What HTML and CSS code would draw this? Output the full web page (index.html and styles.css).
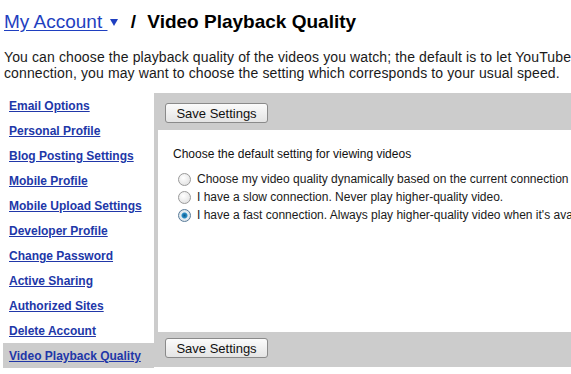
FILE: index.html
```html
<!DOCTYPE html>
<html lang="en">
<head>
    <meta charset="UTF-8">
    <title>Video Playback Quality</title>
    <link rel="stylesheet" href="styles.css">
</head>
<body>
    <div class="page">
        <h1 class="title">
            <a href="#" class="account-link">My Account <span class="caret"></span></a>
            <span class="sep">/</span> Video Playback Quality
        </h1>
        <p class="intro">You can choose the playback quality of the videos you watch; the default is to let YouTube choose the best quality for your<br>connection, you may want to choose the setting which corresponds to your usual speed.</p>

        <div class="settings">
            <ul class="side-nav">
                <li><a href="#">Email Options</a></li>
                <li><a href="#">Personal Profile</a></li>
                <li><a href="#">Blog Posting Settings</a></li>
                <li><a href="#">Mobile Profile</a></li>
                <li><a href="#">Mobile Upload Settings</a></li>
                <li><a href="#">Developer Profile</a></li>
                <li><a href="#">Change Password</a></li>
                <li><a href="#">Active Sharing</a></li>
                <li><a href="#">Authorized Sites</a></li>
                <li><a href="#">Delete Account</a></li>
                <li class="selected"><a href="#">Video Playback Quality</a></li>
            </ul>

            <div class="panel">
                <div class="bar bar-top">
                    <button type="button" class="btn">Save Settings</button>
                </div>
                <div class="content">
                    <p class="question">Choose the default setting for viewing videos</p>
                    <label class="option"><span class="radio"></span>Choose my video quality dynamically based on the current connection speed.</label>
                    <label class="option"><span class="radio"></span>I have a slow connection. Never play higher-quality video.</label>
                    <label class="option"><span class="radio checked"></span>I have a fast connection. Always play higher-quality video when it's available.</label>
                </div>
                <div class="bar bar-bottom">
                    <button type="button" class="btn">Save Settings</button>
                </div>
            </div>
        </div>
    </div>
</body>
</html>
```

FILE: styles.css
```css
html, body {
    margin: 0;
    padding: 0;
    overflow: hidden;
    background: #ffffff;
}
body {
    font-family: 'Liberation Sans', Arial, sans-serif;
    color: #111111;
}
.page {
    width: 800px;
}
.title {
    margin: 0;
    padding: 10px 0 0 4px;
    height: 31px;
    font-size: 19px;
    line-height: 24px;
    font-weight: bold;
    color: #000000;
    white-space: nowrap;
}
.account-link {
    font-weight: normal;
    color: #1f3fc0;
    text-decoration: underline;
    text-underline-offset: 2px;
}
.caret {
    display: inline-block;
    width: 0;
    height: 0;
    border-left: 4px solid transparent;
    border-right: 4px solid transparent;
    border-top: 7px solid #1f3fc0;
    vertical-align: 2px;
    margin-left: 2px;
}
.sep {
    margin: 0 6px 0 8px;
}
.intro {
    margin: 0;
    padding: 8px 0 0 4px;
    height: 44px;
    font-size: 14px;
    line-height: 16px;
    letter-spacing: 0.12px;
    color: #1a1a1a;
    white-space: nowrap;
}
.settings {
    display: flex;
    align-items: flex-start;
}
.side-nav {
    list-style: none;
    margin: 0;
    padding: 0 0 0 3px;
    width: 151px;
    flex-shrink: 0;
}
.side-nav li {
    height: 25px;
    line-height: 27px;
    padding-left: 6px;
    font-size: 12px;
    font-weight: bold;
}
.side-nav a {
    color: #2137a8;
    text-decoration: underline;
}
.side-nav li.selected {
    background: #cccccc;
}
.panel {
    flex: 1;
    background: #cccccc;
    padding-left: 4px;
}
.bar {
    margin-left: -4px;
    padding-left: 11px;
}
.bar-top {
    height: 37px;
    padding-top: 10px;
    box-sizing: border-box;
}
.bar-bottom {
    height: 35px;
    padding-top: 6px;
    box-sizing: border-box;
}
.btn {
    height: 20px;
    width: 103px;
    padding: 0;
    font-family: 'Liberation Sans', Arial, sans-serif;
    font-size: 13px;
    color: #111111;
    background: linear-gradient(#fbfbfb, #e4e4e4);
    border: 1px solid #8a8a8a;
    border-radius: 3px;
}
.content {
    background: #ffffff;
    height: 202px;
    padding: 17px 0 0 15px;
    box-sizing: border-box;
    font-size: 12px;
    white-space: nowrap;
}
.question {
    margin: 0 0 9px;
    line-height: 14px;
}
.option {
    display: flex;
    align-items: center;
    height: 18px;
    padding-left: 5px;
    color: #1a1a1a;
}
.radio {
    width: 11px;
    height: 11px;
    border: 1px solid #9a9a9a;
    border-radius: 50%;
    background: radial-gradient(circle at 40% 35%, #ffffff, #dcdcdc);
    margin-right: 6px;
    flex-shrink: 0;
}
.radio.checked {
    border-color: #5a7c9a;
    background: radial-gradient(circle, #0f5a8a 0, #2b8fc8 2.5px, #e8eef2 3.5px, #d0d8de 100%);
}
```
